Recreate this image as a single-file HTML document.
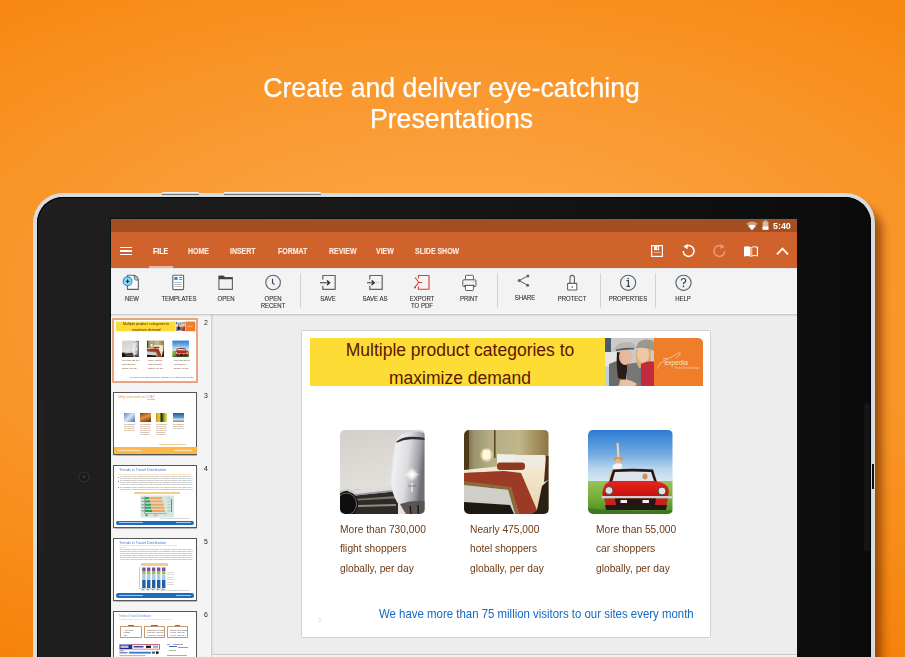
<!DOCTYPE html>
<html><head><meta charset="utf-8">
<style>
html,body{margin:0;padding:0;}
body{width:905px;height:657px;overflow:hidden;position:relative;font-family:"Liberation Sans",sans-serif;
background:radial-gradient(ellipse 820px 430px at 450px 300px,#FCA846 0%,#FBA03D 30%,#F8901F 70%,#F5820A 100%);}
.a{position:absolute;}
#title{left:-1px;width:905px;top:71.5px;text-align:center;color:#fff;font-size:27.5px;line-height:31.2px;transform:scaleX(0.97);-webkit-text-stroke:0.25px #fff;}
#shadowR{left:836px;top:208px;width:46px;height:500px;border-radius:28px;background:rgba(120,45,0,0.7);filter:blur(5px);}
#frame{left:33px;top:193px;width:842px;height:600px;border-radius:30px;background:#D9DCDE;}
#bezel{left:37px;top:197px;width:834px;height:600px;border-radius:26px;background:linear-gradient(90deg,#1F1F1F,#161616 50%,#0B0B0B);box-shadow:inset 0 0 0 1px #000;}
#screen{left:111px;top:219px;width:686px;height:438px;background:#EDEDED;box-shadow:0 0 0 1px #06141a;}
#status{left:111px;top:219px;width:686px;height:13px;background:#A34F22;}
#toolbar{left:111px;top:232px;width:686px;height:36px;background:#D0622B;}
#ribbon{left:111px;top:268px;width:686px;height:45px;background:linear-gradient(#DCE2E4 0,#EEF0F0 1px,#F3F3F3 2.5px);border-bottom:1px solid #F9F9F9;}
#pane{left:111px;top:314px;width:100px;height:343px;background:#F4F4F4;border-right:1px solid #D0D0D0;box-shadow:1px 0 1px rgba(0,0,0,0.06);}
#main{left:212px;top:654px;width:585px;height:3px;background:#FBF1E6;border-top:1px solid #C8C8C8;}
#slide{left:301px;top:330px;width:410px;height:308px;background:#fff;border:1px solid #D2D2D2;border-radius:1.5px;box-sizing:border-box;}
.tab{top:233px;height:36px;line-height:36px;font-size:8.5px;font-weight:700;color:#FBE9E0;white-space:nowrap;-webkit-text-stroke:0.15px #FBE9E0;}
.tab span{display:inline-block;transform-origin:0 50%;transform:scaleX(0.82);}
.txt{white-space:nowrap;}
.lbl{width:60px;text-align:center;font-size:6.6px;line-height:7px;color:#2E2E2E;-webkit-text-stroke:0.1px #2E2E2E;transform:scaleX(0.91);white-space:nowrap;}
.sep{top:273px;width:1px;height:35px;background:#D2D2D2;}
.ph{width:84.5px;height:84px;border-radius:5px;overflow:hidden;}
.ph svg{filter:blur(0.35px);}
.cap{font-size:10.4px;line-height:19.2px;color:#6E3A12;white-space:nowrap;transform-origin:0 0;transform:scaleX(0.985);}
.thb{left:112.7px;width:84.6px;height:63px;border:1.2px solid #555;background:#fff;box-sizing:border-box;box-shadow:0 0.5px 1px rgba(0,0,0,0.25);}
.num{left:202px;width:8px;text-align:center;font-size:6.8px;line-height:7px;color:#151515;margin-top:-1px;transform:scale(1.01);text-shadow:0 0 1px #fff;}
.tl{background:repeating-linear-gradient(#A87A50 0,#A87A50 0.7px,transparent 0.7px,transparent 2.1px);opacity:0.45;}
.gl{background:repeating-linear-gradient(#A0A0A0 0,#A0A0A0 0.7px,transparent 0.7px,transparent 1.8px);opacity:0.5;}
.bx{top:625.5px;width:21.5px;height:12px;border:0.8px solid #C49A6C;box-sizing:border-box;background:#fff;border-radius:0.8px;font-size:1.9px;line-height:2.5px;color:#333;padding:2.2px 0 0 2.5px;white-space:nowrap;overflow:hidden;}
</style></head><body>
<div id="title" class="a">Create and deliver eye-catching<br>Presentations</div>
<div id="shadowR" class="a"></div>
<div id="frame" class="a"></div>
<div id="bezel" class="a"></div>
<div class="a" style="left:162px;top:192px;width:37px;height:4px;background:linear-gradient(#eef0f1 0,#eef0f1 35%,#5e5e5e 50%,#6a6a6a 60%,#d6d8d9 80%);border-radius:1px"></div>
<div class="a" style="left:224px;top:192px;width:97px;height:4px;background:linear-gradient(#eef0f1 0,#eef0f1 35%,#5e5e5e 50%,#6a6a6a 60%,#d6d8d9 80%);border-radius:1px"></div>
<div class="a" style="left:39px;top:403px;width:4px;height:148px;background:#222;border-radius:2px"></div>
<div class="a" style="left:864px;top:403px;width:6px;height:148px;background:#151515;border-radius:2px"></div>
<div class="a" style="left:872px;top:464px;width:2px;height:25px;background:#111"></div>
<div class="a" style="left:78px;top:470.5px;width:12px;height:12px;border-radius:50%;background:radial-gradient(circle,#2a2a2a 0,#2a2a2a 1.8px,#161616 2.4px,#161616 3.6px,#2c2c2c 4.6px,#262626 5.4px,rgba(30,30,30,0) 6px)"></div>

<div id="screen" class="a"></div>
<div id="status" class="a"></div>
<div id="toolbar" class="a"></div>
<div id="ribbon" class="a"></div>
<div id="pane" class="a"></div>
<div id="main" class="a"></div>
<div id="slide" class="a"></div>
<div class="a" style="left:111px;top:314px;width:686px;height:1px;background:#C9C9C9"></div>
<div class="a" style="left:111px;top:315px;width:686px;height:1.5px;background:linear-gradient(rgba(0,0,0,0.08),rgba(0,0,0,0))"></div>

<!-- status bar -->
<svg class="a" style="left:746px;top:220.5px" width="12" height="10" viewBox="0 0 12 10"><path d="M0.3 2.8 Q6 -1.8 11.7 2.8 L6 9.3 Z" fill="#fff" opacity="0.45"/><path d="M2.4 5.2 Q6 2.4 9.6 5.2 L6 9.3 Z" fill="#fff"/></svg>
<svg class="a" style="left:762px;top:220px" width="7" height="10" viewBox="0 0 7 10"><rect x="2.2" y="0.3" width="2.6" height="1.2" fill="#d9b8a8"/><rect x="0.6" y="1.5" width="5.8" height="8.2" fill="#d9b8a8"/><rect x="0.6" y="6.5" width="5.8" height="3.2" fill="#fff"/></svg>
<div class="a txt" style="left:772.5px;top:218.5px;height:13px;line-height:13px;font-size:9.4px;font-weight:700;color:#fff;transform-origin:0 50%;transform:scaleX(0.95)">5:40</div>
<!-- hamburger -->
<div class="a" style="left:119.5px;top:246.7px;width:12.5px;height:1.6px;background:#fff"></div>
<div class="a" style="left:119.5px;top:250px;width:12.5px;height:1.6px;background:#fff"></div>
<div class="a" style="left:119.5px;top:253.5px;width:12.5px;height:1.6px;background:#fff"></div>
<!-- tabs -->
<div class="a tab" style="left:153.4px;width:14.6px;color:#fff"><span>FILE</span></div>
<div class="a tab" style="left:188.3px;width:21.7px"><span>HOME</span></div>
<div class="a tab" style="left:230.3px;width:26.6px"><span>INSERT</span></div>
<div class="a tab" style="left:277.8px;width:29.9px"><span>FORMAT</span></div>
<div class="a tab" style="left:328.7px;width:27.2px"><span>REVIEW</span></div>
<div class="a tab" style="left:376.2px;width:18.4px"><span>VIEW</span></div>
<div class="a tab" style="left:414.9px;width:44.2px"><span>SLIDE SHOW</span></div>
<div class="a" style="left:148.6px;top:266px;width:24.3px;height:2px;background:#E9B9A2"></div>
<!-- toolbar icons -->
<svg class="a" style="left:645px;top:238px" width="150" height="26" viewBox="645 238 150 26">
 <g fill="none" stroke="#fff" stroke-width="1.2">
  <rect x="651.6" y="245.6" width="10.8" height="10.8"/>
 </g>
 <rect x="654" y="246" width="5.2" height="4.2" fill="#fff"/>
 <rect x="657.2" y="246.6" width="1" height="2.6" fill="#D0622B"/>
 <path d="M653.5 252.5 H660.5" stroke="#f0c4ae" stroke-width="0.8"/>
 <path d="M685.5 246.6 A5.4 5.4 0 1 1 683.2 251" fill="none" stroke="#fff" stroke-width="1.5"/>
 <path d="M683.3 246.6 L687.6 243.9 L687.6 249.3 Z" fill="#fff"/>
 <path d="M722.5 246.6 A5.4 5.4 0 1 0 724.8 251" fill="none" stroke="#E59A78" stroke-width="1.5"/>
 <path d="M724.7 246.6 L720.4 243.9 L720.4 249.3 Z" fill="#E59A78"/>
 <path d="M744 246.8 Q747.5 245.6 751 247.2 Q754.5 245.6 758 246.8 V256.6 Q754.5 255.4 751 256.8 Q747.5 255.4 744 256.6 Z" fill="#fff"/>
 <path d="M751 247.5 V256.2" stroke="#D0622B" stroke-width="0.9"/>
 <path d="M752.2 247.6 Q754.7 246.8 756.8 247.6 V255.3 Q754.7 254.7 752.2 255.3 Z" fill="#D0622B"/>
 <path d="M777 254.3 L782.5 248.6 L788 254.3" fill="none" stroke="#fff" stroke-width="1.8"/>
</svg>



<!-- main slide content -->
<div class="a" id="slidec" style="left:301px;top:330px;width:410px;height:307px">
<div class="a" style="left:9.0px;top:7.5px;width:294.5px;height:48px;background:#FDDC36"></div>
<div class="a txt" style="left:9.0px;top:6.3px;width:300px;text-align:center;font-size:17.5px;line-height:28px;color:#5A1700">Multiple product categories to<br>maximize demand</div>
<div class="a" style="left:303.5px;top:7.5px;width:49.5px;height:48px;overflow:hidden"><svg width="49.5" height="48" viewBox="0 0 49.5 48" style="filter:blur(0.4px)">
<rect width="49.5" height="48" fill="#C9CCCB"/>
<rect x="0" y="0" width="6" height="14" fill="#4A5A70"/>
<rect x="0" y="14" width="14" height="20" fill="#E4E6E4"/>
<path d="M0 28 L22 30 L26 48 L0 48 Z" fill="#BCD2E4"/>
<path d="M4 26 L14 22 L22 44 L12 48 L4 48 Z" fill="#6A6C6A"/>
<path d="M12 14 Q11 26 13 40 L21 42 L24 16 Z" fill="#2A1C14"/>
<ellipse cx="20.5" cy="19" rx="6.5" ry="8" fill="#E9B89A"/>
<path d="M8 13 Q12 4 22 4 Q30 4 31 10 Q27 12 20 11 Q12 12 8 13 Z" fill="#BDB6AE"/>
<path d="M11 11.5 Q20 9 29 10 L29 11.5 Q20 11 11 13 Z" fill="#4A5C7A"/>
<path d="M22 26 L36 24 L40 48 L22 48 Z" fill="#777876"/>
<path d="M31 12 Q30 24 34 30 L46 28 L46 10 Z" fill="#D8B078"/>
<ellipse cx="38" cy="16.5" rx="6" ry="8" fill="#EFC6A8"/>
<path d="M31 10 Q32 2 41 1.5 Q49 1.5 49.5 6 L49.5 13 Q42 9 31 10 Z" fill="#9A9890"/>
<path d="M36 26 Q44 22 49.5 24 L49.5 48 L36 48 Z" fill="#C22A40"/>
<path d="M15 42 Q24 40 32 46 L30 48 L14 48 Z" fill="#E8C0A0"/>
</svg></div>
<div class="a" style="left:353.0px;top:7.5px;width:49px;height:48px;background:#EF7E2B;border-top-right-radius:5px"><svg width="49" height="48" viewBox="0 0 49 48" style="position:absolute;left:0;top:0">
<path d="M2.8 30.5 Q6 24 12 21.5 Q18 19 21 17 Q26 13.8 26.5 15.2 Q26 17.5 21.3 20.3 M9 20.8 Q12 19.8 13.5 20.8" fill="none" stroke="#FBE6D6" stroke-width="0.6"/>
<text x="10.5" y="26.8" font-family="Liberation Sans" font-size="6.6" fill="#FDEBDD" fill-opacity="0.92" textLength="23.5" lengthAdjust="spacingAndGlyphs">expedia</text>
<text x="21" y="30.5" font-family="Liberation Sans" font-size="2.6" fill="#FBD9C2" textLength="24" lengthAdjust="spacingAndGlyphs">Partner Services Group</text>
</svg></div>

<div class="a ph" style="left:39.0px;top:100.0px"><svg width="84.5" height="84" viewBox="0 0 84.5 84">
<defs>
<linearGradient id="sky1" x1="0" y1="0" x2="0.3" y2="1"><stop offset="0" stop-color="#D2CFCB"/><stop offset="0.5" stop-color="#DEDBD7"/><stop offset="1" stop-color="#E6E4E0"/></linearGradient>
<linearGradient id="nose" x1="0" y1="0" x2="1" y2="0.3"><stop offset="0" stop-color="#B4B7BC"/><stop offset="0.2" stop-color="#F0F0F2"/><stop offset="0.55" stop-color="#DCDCDE"/><stop offset="0.85" stop-color="#A0A1A6"/><stop offset="1" stop-color="#6E6F74"/></linearGradient>
<radialGradient id="glow"><stop offset="0" stop-color="#fff"/><stop offset="0.35" stop-color="#fff" stop-opacity="0.9"/><stop offset="1" stop-color="#fff" stop-opacity="0"/></radialGradient>
</defs>
<rect width="84.5" height="84" fill="url(#sky1)"/>
<path d="M0 61 L52 57 L58 66 L58 84 L0 84 Z" fill="#2E2A26"/>
<path d="M8 60.5 L51 55.5 L54 61.5 L10 66 Z" fill="#DCDCDE"/>
<path d="M10 64.5 L53 60 L54 61.5 L11 66 Z" fill="#9A9A9C"/>
<path d="M16 69 L55 66 L56 68.5 L16 70.5 Z" fill="#77726E"/>
<path d="M18 75 L56 74 L56 76 L18 77 Z" fill="#8E8A86"/>
<ellipse cx="6.5" cy="74" rx="11.5" ry="12.5" fill="#0E0E0E"/>
<path d="M-4 70 A11 12 0 0 1 15 64" fill="none" stroke="#C8C8C8" stroke-width="1.6"/>
<ellipse cx="6.5" cy="74" rx="10" ry="11" fill="none" stroke="#6A6A6A" stroke-width="1"/>
<path d="M84.5 3 Q74 0.5 66 2.5 Q56 6 53 20 Q50 36 51 52 Q52 64 57 72 Q62 80 66 84 L84.5 84 Z" fill="url(#nose)"/>
<path d="M56.5 11.5 Q61 7.5 70 6.8 Q79 6.5 84.5 8 L84.5 10 Q78 9 71 9.2 Q63 9.6 56.5 12.8 Z" fill="#2C3036"/>
<path d="M60 74 Q72 70 84.5 71 L84.5 84 L66 84 Z" fill="#5A5552"/>
<path d="M70 76 L71 84 M78 75 L78.5 84" stroke="#1a1a1a" stroke-width="1.5"/>
<circle cx="72" cy="44.5" r="6.5" fill="url(#glow)"/>
<path d="M65 44.5 H79 M72 38 V51" stroke="#fff" stroke-width="0.6" opacity="0.8"/>
<rect x="71.2" y="53" width="1.6" height="9" fill="#fff" opacity="0.7"/>
<path d="M68 56 H76" stroke="#555" stroke-width="1" opacity="0.6"/>
</svg></div>
<div class="a ph" style="left:163.0px;top:100.0px"><svg width="84.5" height="84" viewBox="0 0 84.5 84">
<defs>
<linearGradient id="wall" x1="0" y1="0" x2="1" y2="0"><stop offset="0" stop-color="#6E5A2E"/><stop offset="0.12" stop-color="#9C9470"/><stop offset="0.3" stop-color="#B3AC84"/><stop offset="0.65" stop-color="#C2B68A"/><stop offset="1" stop-color="#8E7542"/></linearGradient>
<radialGradient id="lamp"><stop offset="0" stop-color="#FFFBE8"/><stop offset="0.5" stop-color="#FFF3C8"/><stop offset="1" stop-color="#FFE9A0" stop-opacity="0"/></radialGradient>
<linearGradient id="sheet" x1="0" y1="0" x2="0" y2="1"><stop offset="0" stop-color="#F4EAD2"/><stop offset="1" stop-color="#E6D6B0"/></linearGradient>
</defs>
<rect width="84.5" height="84" fill="url(#wall)"/>
<rect x="30" y="0" width="1.6" height="28" fill="#5E4A22"/>
<rect x="0" y="0" width="5" height="40" fill="#4E3A1A"/>
<ellipse cx="22.5" cy="25" rx="7" ry="8" fill="url(#lamp)"/>
<rect x="19" y="20" width="7" height="9" fill="#FFF8E0"/>
<path d="M33 24 L53 24.5 L53 36 L33 37 Z" fill="#F0EEE8"/>
<path d="M50 25 L81 25 L84 38 L50 38 Z" fill="#EEEAE2"/>
<path d="M0 40 L33 36.5 L84.5 36.5 L84.5 60 L72 82 L57 43 L40 41 L0 43 Z" fill="url(#sheet)"/>
<rect x="33" y="32.5" width="28" height="7.5" rx="3" fill="#8E3A1E"/>
<path d="M0 43 L40 41 L57 43 L73 80 L68 84 L55 84 L47 58 L0 52 Z" fill="#9C3A26"/>
<path d="M0 51 L47 57 L55 84 L51 84 L44 60 L0 55 Z" fill="#8A6A3A"/>
<path d="M0 55 L44 60 L51 84 L0 84 Z" fill="#CFCEC8"/>
<path d="M0 72 L46 75 L50 84 L0 84 Z" fill="#1E1812"/>
<path d="M78 56 L84.5 50 L84.5 84 L68 84 L73 80 Z" fill="#2A2016"/>
<path d="M82 26 L84.5 26 L84.5 50 L80 52 Z" fill="#4A2A1A"/>
</svg></div>
<div class="a ph" style="left:287.3px;top:100.0px"><svg width="84.5" height="84" viewBox="0 0 84.5 84">
<defs>
<linearGradient id="sky3" x1="0" y1="0" x2="0" y2="1"><stop offset="0" stop-color="#2C7BD4"/><stop offset="0.45" stop-color="#6FA9E0"/><stop offset="0.75" stop-color="#B9D6EE"/><stop offset="1" stop-color="#D8E8F2"/></linearGradient>
<linearGradient id="grass" x1="0" y1="0" x2="0" y2="1"><stop offset="0" stop-color="#9AC25A"/><stop offset="0.5" stop-color="#74AE3A"/><stop offset="1" stop-color="#4A8A24"/></linearGradient>
<linearGradient id="red" x1="0" y1="0" x2="0" y2="1"><stop offset="0" stop-color="#E8241C"/><stop offset="1" stop-color="#C4120E"/></linearGradient>
</defs>
<rect width="84.5" height="52" fill="url(#sky3)"/>
<rect y="51" width="84.5" height="33" fill="url(#grass)"/>
<path d="M28.5 13 L30.5 13 L31.5 28 L29.5 28.5 Z" fill="#F2D2B0"/>
<path d="M25 28.5 Q30 25.5 35.5 28.5 L33 31 L27 31 Z" fill="#C89A5A"/>
<ellipse cx="30" cy="31.5" rx="2.6" ry="2.8" fill="#E8B890"/>
<path d="M25 35 Q29 32 34 34 L33 50 L24 50 Z" fill="#F6F2EC"/>
<path d="M24 36 L21 48 L24 49 Z" fill="#E8C8A0"/>
<path d="M21 52 L25 39.5 Q45 38 65 39.5 L69 52 Z" fill="#2A1616"/>
<path d="M24.5 51 L27 42 Q45 40.8 63 42 L66 51 Z" fill="#DDE4EA"/>
<ellipse cx="57" cy="46.5" rx="2.5" ry="3" fill="#C8906A"/>
<path d="M15 60 Q16 52 24 51 L66 51 Q75 52 79 56 Q82 60 80 66.5 L15 66.5 Q13.5 63 15 60 Z" fill="url(#red)"/>
<circle cx="21" cy="60.5" r="4" fill="#DCE0E4" stroke="#3a3a3a" stroke-width="0.9"/>
<circle cx="74" cy="61" r="4" fill="#DCE0E4" stroke="#3a3a3a" stroke-width="0.9"/>
<rect x="13.5" y="66" width="71" height="2.4" rx="1" fill="#CDD1D5"/>
<path d="M16 68.4 L80 68.4 L78.5 75 L18 75 Z" fill="#C8201A"/>
<path d="M27 68.4 L68 68.4 L67 75 L28 75 Z" fill="#2A1412"/>
<rect x="32.5" y="70" width="6.5" height="3" fill="#EEEEEE"/>
<rect x="54.5" y="70" width="6.5" height="3" fill="#EEEEEE"/>
<path d="M17 75 L79 75 L78 80 L18 80 Z" fill="#1E1A18"/>
<path d="M0 78 Q30 82 84.5 80 L84.5 84 L0 84 Z" fill="#2E5E18" opacity="0.5"/>
</svg></div>
<div class="a cap" style="top:190.2px;left:38.7px">More than 730,000<br>flight shoppers<br>globally, per day</div>
<div class="a cap" style="top:190.2px;left:168.7px">Nearly 475,000<br>hotel shoppers<br>globally, per day</div>
<div class="a cap" style="top:190.2px;left:294.5px">More than 55,000<br>car shoppers<br>globally, per day</div>
<div class="a txt" style="left:78.0px;top:275.7px;font-size:12.4px;line-height:16px;color:#1368C6;transform-origin:0 0;transform:scaleX(0.922)">We have more than 75 million visitors to our sites every month</div>
<div class="a txt" style="left:17.5px;top:287.0px;font-size:5px;line-height:6px;color:#F9C889">2</div>
</div>

<!-- thumbnails -->
<div class="a" style="left:113.5px;top:319.5px;width:83px;height:62px;background:#fff;overflow:hidden"><div class="a" style="left:0;top:0;width:410px;height:307px;transform-origin:0 0;transform:scale(0.2025)">
<div class="a" style="left:9.0px;top:7.5px;width:294.5px;height:48px;background:#FDDC36"></div>
<div class="a txt" style="left:9.0px;top:6.3px;width:300px;text-align:center;font-size:17.5px;line-height:28px;color:#5A1700">Multiple product categories to<br>maximize demand</div>
<div class="a" style="left:303.5px;top:7.5px;width:49.5px;height:48px;overflow:hidden"><svg width="49.5" height="48" viewBox="0 0 49.5 48" style="filter:blur(0.4px)">
<rect width="49.5" height="48" fill="#C9CCCB"/>
<rect x="0" y="0" width="6" height="14" fill="#4A5A70"/>
<rect x="0" y="14" width="14" height="20" fill="#E4E6E4"/>
<path d="M0 28 L22 30 L26 48 L0 48 Z" fill="#BCD2E4"/>
<path d="M4 26 L14 22 L22 44 L12 48 L4 48 Z" fill="#6A6C6A"/>
<path d="M12 14 Q11 26 13 40 L21 42 L24 16 Z" fill="#2A1C14"/>
<ellipse cx="20.5" cy="19" rx="6.5" ry="8" fill="#E9B89A"/>
<path d="M8 13 Q12 4 22 4 Q30 4 31 10 Q27 12 20 11 Q12 12 8 13 Z" fill="#BDB6AE"/>
<path d="M11 11.5 Q20 9 29 10 L29 11.5 Q20 11 11 13 Z" fill="#4A5C7A"/>
<path d="M22 26 L36 24 L40 48 L22 48 Z" fill="#777876"/>
<path d="M31 12 Q30 24 34 30 L46 28 L46 10 Z" fill="#D8B078"/>
<ellipse cx="38" cy="16.5" rx="6" ry="8" fill="#EFC6A8"/>
<path d="M31 10 Q32 2 41 1.5 Q49 1.5 49.5 6 L49.5 13 Q42 9 31 10 Z" fill="#9A9890"/>
<path d="M36 26 Q44 22 49.5 24 L49.5 48 L36 48 Z" fill="#C22A40"/>
<path d="M15 42 Q24 40 32 46 L30 48 L14 48 Z" fill="#E8C0A0"/>
</svg></div>
<div class="a" style="left:353.0px;top:7.5px;width:49px;height:48px;background:#EF7E2B;border-top-right-radius:5px"><svg width="49" height="48" viewBox="0 0 49 48" style="position:absolute;left:0;top:0">
<path d="M2.8 30.5 Q6 24 12 21.5 Q18 19 21 17 Q26 13.8 26.5 15.2 Q26 17.5 21.3 20.3 M9 20.8 Q12 19.8 13.5 20.8" fill="none" stroke="#FBE6D6" stroke-width="0.6"/>
<text x="10.5" y="26.8" font-family="Liberation Sans" font-size="6.6" fill="#FDEBDD" fill-opacity="0.92" textLength="23.5" lengthAdjust="spacingAndGlyphs">expedia</text>
<text x="21" y="30.5" font-family="Liberation Sans" font-size="2.6" fill="#FBD9C2" textLength="24" lengthAdjust="spacingAndGlyphs">Partner Services Group</text>
</svg></div>

<div class="a ph" style="left:39.0px;top:100.0px"><svg width="84.5" height="84" viewBox="0 0 84.5 84">

<rect width="84.5" height="84" fill="url(#sky1)"/>
<path d="M0 61 L52 57 L58 66 L58 84 L0 84 Z" fill="#2E2A26"/>
<path d="M8 60.5 L51 55.5 L54 61.5 L10 66 Z" fill="#DCDCDE"/>
<path d="M10 64.5 L53 60 L54 61.5 L11 66 Z" fill="#9A9A9C"/>
<path d="M16 69 L55 66 L56 68.5 L16 70.5 Z" fill="#77726E"/>
<path d="M18 75 L56 74 L56 76 L18 77 Z" fill="#8E8A86"/>
<ellipse cx="6.5" cy="74" rx="11.5" ry="12.5" fill="#0E0E0E"/>
<path d="M-4 70 A11 12 0 0 1 15 64" fill="none" stroke="#C8C8C8" stroke-width="1.6"/>
<ellipse cx="6.5" cy="74" rx="10" ry="11" fill="none" stroke="#6A6A6A" stroke-width="1"/>
<path d="M84.5 3 Q74 0.5 66 2.5 Q56 6 53 20 Q50 36 51 52 Q52 64 57 72 Q62 80 66 84 L84.5 84 Z" fill="url(#nose)"/>
<path d="M56.5 11.5 Q61 7.5 70 6.8 Q79 6.5 84.5 8 L84.5 10 Q78 9 71 9.2 Q63 9.6 56.5 12.8 Z" fill="#2C3036"/>
<path d="M60 74 Q72 70 84.5 71 L84.5 84 L66 84 Z" fill="#5A5552"/>
<path d="M70 76 L71 84 M78 75 L78.5 84" stroke="#1a1a1a" stroke-width="1.5"/>
<circle cx="72" cy="44.5" r="6.5" fill="url(#glow)"/>
<path d="M65 44.5 H79 M72 38 V51" stroke="#fff" stroke-width="0.6" opacity="0.8"/>
<rect x="71.2" y="53" width="1.6" height="9" fill="#fff" opacity="0.7"/>
<path d="M68 56 H76" stroke="#555" stroke-width="1" opacity="0.6"/>
</svg></div>
<div class="a ph" style="left:163.0px;top:100.0px"><svg width="84.5" height="84" viewBox="0 0 84.5 84">

<rect width="84.5" height="84" fill="url(#wall)"/>
<rect x="30" y="0" width="1.6" height="28" fill="#5E4A22"/>
<rect x="0" y="0" width="5" height="40" fill="#4E3A1A"/>
<ellipse cx="22.5" cy="25" rx="7" ry="8" fill="url(#lamp)"/>
<rect x="19" y="20" width="7" height="9" fill="#FFF8E0"/>
<path d="M33 24 L53 24.5 L53 36 L33 37 Z" fill="#F0EEE8"/>
<path d="M50 25 L81 25 L84 38 L50 38 Z" fill="#EEEAE2"/>
<path d="M0 40 L33 36.5 L84.5 36.5 L84.5 60 L72 82 L57 43 L40 41 L0 43 Z" fill="url(#sheet)"/>
<rect x="33" y="32.5" width="28" height="7.5" rx="3" fill="#8E3A1E"/>
<path d="M0 43 L40 41 L57 43 L73 80 L68 84 L55 84 L47 58 L0 52 Z" fill="#9C3A26"/>
<path d="M0 51 L47 57 L55 84 L51 84 L44 60 L0 55 Z" fill="#8A6A3A"/>
<path d="M0 55 L44 60 L51 84 L0 84 Z" fill="#CFCEC8"/>
<path d="M0 72 L46 75 L50 84 L0 84 Z" fill="#1E1812"/>
<path d="M78 56 L84.5 50 L84.5 84 L68 84 L73 80 Z" fill="#2A2016"/>
<path d="M82 26 L84.5 26 L84.5 50 L80 52 Z" fill="#4A2A1A"/>
</svg></div>
<div class="a ph" style="left:287.3px;top:100.0px"><svg width="84.5" height="84" viewBox="0 0 84.5 84">

<rect width="84.5" height="52" fill="url(#sky3)"/>
<rect y="51" width="84.5" height="33" fill="url(#grass)"/>
<path d="M28.5 13 L30.5 13 L31.5 28 L29.5 28.5 Z" fill="#F2D2B0"/>
<path d="M25 28.5 Q30 25.5 35.5 28.5 L33 31 L27 31 Z" fill="#C89A5A"/>
<ellipse cx="30" cy="31.5" rx="2.6" ry="2.8" fill="#E8B890"/>
<path d="M25 35 Q29 32 34 34 L33 50 L24 50 Z" fill="#F6F2EC"/>
<path d="M24 36 L21 48 L24 49 Z" fill="#E8C8A0"/>
<path d="M21 52 L25 39.5 Q45 38 65 39.5 L69 52 Z" fill="#2A1616"/>
<path d="M24.5 51 L27 42 Q45 40.8 63 42 L66 51 Z" fill="#DDE4EA"/>
<ellipse cx="57" cy="46.5" rx="2.5" ry="3" fill="#C8906A"/>
<path d="M15 60 Q16 52 24 51 L66 51 Q75 52 79 56 Q82 60 80 66.5 L15 66.5 Q13.5 63 15 60 Z" fill="url(#red)"/>
<circle cx="21" cy="60.5" r="4" fill="#DCE0E4" stroke="#3a3a3a" stroke-width="0.9"/>
<circle cx="74" cy="61" r="4" fill="#DCE0E4" stroke="#3a3a3a" stroke-width="0.9"/>
<rect x="13.5" y="66" width="71" height="2.4" rx="1" fill="#CDD1D5"/>
<path d="M16 68.4 L80 68.4 L78.5 75 L18 75 Z" fill="#C8201A"/>
<path d="M27 68.4 L68 68.4 L67 75 L28 75 Z" fill="#2A1412"/>
<rect x="32.5" y="70" width="6.5" height="3" fill="#EEEEEE"/>
<rect x="54.5" y="70" width="6.5" height="3" fill="#EEEEEE"/>
<path d="M17 75 L79 75 L78 80 L18 80 Z" fill="#1E1A18"/>
<path d="M0 78 Q30 82 84.5 80 L84.5 84 L0 84 Z" fill="#2E5E18" opacity="0.5"/>
</svg></div>
<div class="a cap" style="top:190.2px;left:38.7px">More than 730,000<br>flight shoppers<br>globally, per day</div>
<div class="a cap" style="top:190.2px;left:168.7px">Nearly 475,000<br>hotel shoppers<br>globally, per day</div>
<div class="a cap" style="top:190.2px;left:294.5px">More than 55,000<br>car shoppers<br>globally, per day</div>
<div class="a txt" style="left:78.0px;top:275.7px;font-size:12.4px;line-height:16px;color:#1368C6;transform-origin:0 0;transform:scaleX(0.922)">We have more than 75 million visitors to our sites every month</div>
<div class="a txt" style="left:17.5px;top:287.0px;font-size:5px;line-height:6px;color:#F9C889">2</div>
</div></div>
<div class="a th" style="left:112px;top:318px;width:86px;height:65px;border:2px solid #E9A486;box-sizing:border-box"></div>
<div class="a num" style="top:320px">2</div>

<div class="a thb" style="top:391.8px"></div>
<div class="a num" style="top:392.6px">3</div>
<div class="a" style="left:118.5px;top:396px;width:38px;height:3px;font-size:3.4px;line-height:3px;color:#F0912E;white-space:nowrap">Why work with an OTA?</div><div class="a" style="left:147px;top:398.9px;width:8px;height:0.6px;background:#F5B5BD"></div>
<div class="a" style="left:124px;top:412.5px;width:11px;height:9.5px;background:linear-gradient(135deg,#5C8CC8,#D8E4F0 50%,#3C6CA8)"></div>
<div class="a" style="left:140px;top:412.5px;width:11px;height:9.5px;background:linear-gradient(160deg,#7A3C10,#E89040 45%,#5A2A08)"></div>
<div class="a" style="left:156px;top:412.5px;width:11px;height:9.5px;background:linear-gradient(90deg,#C89010,#F0D040 30%,#203010 50%,#90B030 75%,#FFE070)"></div>
<div class="a" style="left:173px;top:412.5px;width:11px;height:9.5px;background:linear-gradient(180deg,#1E5A9A,#5AA0D8 50%,#E8E0C8 70%,#7A8090)"></div>
<div class="a" style="left:124px;top:424px;width:11px;height:7.6px;overflow:hidden;font-size:1.6px;line-height:1.9px;color:#8A5A30;word-break:break-all">The transaction market continues to grow as online travel agencies capture more share from traditional offline channels and suppliers worldwide The transaction market continues to grow as online travel agencies capture more share from traditional offline channels and suppliers worldwide The transaction market continues to grow as online travel agencies capture more share from traditional offline channels and suppliers worldwide The transaction market continues to grow as online travel agencies capture more share from traditional offline channels and suppliers worldwide</div>
<div class="a" style="left:140px;top:424px;width:11px;height:11.399999999999999px;overflow:hidden;font-size:1.6px;line-height:1.9px;color:#8A5A30;word-break:break-all">The transaction market continues to grow as online travel agencies capture more share from traditional offline channels and suppliers worldwide The transaction market continues to grow as online travel agencies capture more share from traditional offline channels and suppliers worldwide The transaction market continues to grow as online travel agencies capture more share from traditional offline channels and suppliers worldwide The transaction market continues to grow as online travel agencies capture more share from traditional offline channels and suppliers worldwide</div>
<div class="a" style="left:156px;top:424px;width:11px;height:11.399999999999999px;overflow:hidden;font-size:1.6px;line-height:1.9px;color:#8A5A30;word-break:break-all">The transaction market continues to grow as online travel agencies capture more share from traditional offline channels and suppliers worldwide The transaction market continues to grow as online travel agencies capture more share from traditional offline channels and suppliers worldwide The transaction market continues to grow as online travel agencies capture more share from traditional offline channels and suppliers worldwide The transaction market continues to grow as online travel agencies capture more share from traditional offline channels and suppliers worldwide</div>
<div class="a" style="left:173px;top:424px;width:11px;height:5.699999999999999px;overflow:hidden;font-size:1.6px;line-height:1.9px;color:#8A5A30;word-break:break-all">The transaction market continues to grow as online travel agencies capture more share from traditional offline channels and suppliers worldwide The transaction market continues to grow as online travel agencies capture more share from traditional offline channels and suppliers worldwide The transaction market continues to grow as online travel agencies capture more share from traditional offline channels and suppliers worldwide The transaction market continues to grow as online travel agencies capture more share from traditional offline channels and suppliers worldwide</div>
<div class="a" style="left:159px;top:443.5px;width:27px;height:1.2px;background:#FAD08A"></div>
<div class="a" style="left:113.5px;top:447px;width:83px;height:6.8px;background:#FBB748"></div>
<div class="a" style="left:117px;top:449.8px;width:24px;height:1px;background:#FDE2B4"></div>
<div class="a" style="left:174px;top:449.8px;width:18px;height:1px;background:#FDE2B4"></div>

<div class="a thb" style="top:465.2px"></div>
<div class="a num" style="top:466px">4</div>
<div class="a" style="left:118.5px;top:468.4px;font-size:3.5px;line-height:4px;color:#3C7CCC;white-space:nowrap;transform-origin:0 0;transform:scaleX(1.08)">Trends in Travel Distribution</div>
<div class="a" style="left:118.5px;top:472.8px;width:72px;height:2px;overflow:hidden;font-size:1.8px;line-height:2px;color:#F4A640;white-space:nowrap">Online travel agencies continue to gain share from supplier direct channels across all travel segments worldwide</div>
<div class="a" style="left:119.5px;top:475.8px;width:73px;height:3.9px;overflow:hidden;font-size:1.75px;line-height:1.95px;color:#6a6a6a;word-break:break-all">The transaction market continues to grow as online travel agencies capture more share from traditional offline channels and suppliers worldwide The transaction market continues to grow as online travel agencies capture more share from traditional offline channels and suppliers worldwide The transaction market continues to grow as online travel agencies capture more share from traditional offline channels and suppliers worldwide The transaction market continues to grow as online travel agencies capture more share from traditional offline channels and suppliers worldwide</div><div class="a" style="left:119.5px;top:479.8px;width:73px;height:5.85px;overflow:hidden;font-size:1.75px;line-height:1.95px;color:#6a6a6a;word-break:break-all">The transaction market continues to grow as online travel agencies capture more share from traditional offline channels and suppliers worldwide The transaction market continues to grow as online travel agencies capture more share from traditional offline channels and suppliers worldwide The transaction market continues to grow as online travel agencies capture more share from traditional offline channels and suppliers worldwide The transaction market continues to grow as online travel agencies capture more share from traditional offline channels and suppliers worldwide</div><div class="a" style="left:119.5px;top:486.6px;width:73px;height:3.9px;overflow:hidden;font-size:1.75px;line-height:1.95px;color:#6a6a6a;word-break:break-all">The transaction market continues to grow as online travel agencies capture more share from traditional offline channels and suppliers worldwide The transaction market continues to grow as online travel agencies capture more share from traditional offline channels and suppliers worldwide The transaction market continues to grow as online travel agencies capture more share from traditional offline channels and suppliers worldwide The transaction market continues to grow as online travel agencies capture more share from traditional offline channels and suppliers worldwide</div><div class="a" style="left:117.6px;top:476.5px;width:0.8px;height:0.8px;background:#888"></div><div class="a" style="left:117.6px;top:480.5px;width:0.8px;height:0.8px;background:#888"></div><div class="a" style="left:117.6px;top:487.3px;width:0.8px;height:0.8px;background:#888"></div>
<div class="a" style="left:134px;top:492px;width:46px;height:2.2px;background:#F8CC88"></div>
<svg class="a" style="left:140px;top:495px" width="35" height="23" viewBox="0 0 35 23">
<rect x="0.5" y="0.5" width="33.5" height="22" fill="#D3E7DF"/>
<g fill="#2E9E5A"><rect x="5" y="2.2" width="4" height="2"/><rect x="5" y="5.4" width="5" height="2"/><rect x="5" y="8.7" width="6" height="2"/><rect x="5" y="11.7" width="6" height="2"/><rect x="5" y="14.8" width="7" height="2.2"/></g>
<g fill="#F3A25C"><rect x="9" y="2.2" width="13" height="2"/><rect x="10" y="5.4" width="12.8" height="2"/><rect x="11" y="8.7" width="12.8" height="2"/><rect x="11" y="11.7" width="13.3" height="2"/><rect x="12" y="14.8" width="12.8" height="2.2"/></g>
<g fill="#9AA8A4"><rect x="1.5" y="2.5" width="2.5" height="1.4"/><rect x="1.5" y="5.7" width="2.5" height="1.4"/><rect x="1.5" y="9" width="2.5" height="1.4"/><rect x="1.5" y="12" width="2.5" height="1.4"/><rect x="1.5" y="15.1" width="2.5" height="1.4"/></g>
<rect x="4.6" y="1.5" width="0.5" height="17" fill="#555"/>
<rect x="4.6" y="18.3" width="22" height="0.5" fill="#777"/>
<g fill="#B8C4C0"><rect x="27.5" y="2.5" width="3" height="1.2"/><rect x="27.5" y="5.7" width="3" height="1.2"/><rect x="27.5" y="9" width="3" height="1.2"/><rect x="27.5" y="12" width="3" height="1.2"/><rect x="27.5" y="15.1" width="3" height="1.2"/></g>
<rect x="31" y="4" width="0.8" height="13" fill="#666"/>
<rect x="5" y="19.5" width="3" height="1.3" fill="#2E9E5A"/><rect x="14" y="19.5" width="3" height="1.3" fill="#F3A25C"/>
</svg>
<div class="a" style="left:160px;top:517.5px;width:30px;height:1.5px;background:#D8D8D8"></div>
<div class="a" style="left:116px;top:520.5px;width:78px;height:4.5px;border-radius:2.2px;background:#1F6BC0"></div><div class="a" style="left:119px;top:522.3px;width:24px;height:0.8px;background:#A8C8F0"></div><div class="a" style="left:176px;top:522.3px;width:15px;height:0.8px;background:#A8C8F0"></div>

<div class="a thb" style="top:538.2px"></div>
<div class="a num" style="top:539px">5</div>
<div class="a" style="left:118.5px;top:541px;font-size:3.5px;line-height:4px;color:#3C7CCC;white-space:nowrap;transform-origin:0 0;transform:scaleX(1.08)">Trends in Travel Distribution</div>
<div class="a" style="left:118.5px;top:544.4px;width:58px;height:2px;overflow:hidden;font-size:1.8px;line-height:2px;color:#F4A640;white-space:nowrap">Leisure travelers use online travel agencies and supplier sites when booking travel</div>
<div class="a" style="left:118.5px;top:546.4px;width:10px;height:2px;overflow:hidden;font-size:1.8px;line-height:2px;color:#F4A640;white-space:nowrap">channels</div>
<div class="a" style="left:119.5px;top:548.6px;width:73px;height:5.85px;overflow:hidden;font-size:1.75px;line-height:1.95px;color:#6a6a6a;word-break:break-all">The transaction market continues to grow as online travel agencies capture more share from traditional offline channels and suppliers worldwide The transaction market continues to grow as online travel agencies capture more share from traditional offline channels and suppliers worldwide The transaction market continues to grow as online travel agencies capture more share from traditional offline channels and suppliers worldwide The transaction market continues to grow as online travel agencies capture more share from traditional offline channels and suppliers worldwide</div><div class="a" style="left:119.5px;top:555.2px;width:73px;height:5.85px;overflow:hidden;font-size:1.75px;line-height:1.95px;color:#6a6a6a;word-break:break-all">The transaction market continues to grow as online travel agencies capture more share from traditional offline channels and suppliers worldwide The transaction market continues to grow as online travel agencies capture more share from traditional offline channels and suppliers worldwide The transaction market continues to grow as online travel agencies capture more share from traditional offline channels and suppliers worldwide The transaction market continues to grow as online travel agencies capture more share from traditional offline channels and suppliers worldwide</div>
<div class="a" style="left:141px;top:563px;width:27px;height:3px;background:#F8CC88"></div>
<svg class="a" style="left:138px;top:566px" width="30" height="25" viewBox="0 0 30 25"><rect x="1.2" y="1" width="0.5" height="21" fill="#999"/><rect x="1.2" y="22" width="26" height="0.5" fill="#aaa"/><rect x="4.2" y="1.5" width="3.4" height="4" fill="#7B4FA2"/><rect x="4.2" y="5.5" width="3.4" height="3" fill="#9DC044"/><rect x="4.2" y="8.5" width="3.4" height="5.5" fill="#A8CCEC"/><rect x="4.2" y="14" width="3.4" height="8" fill="#2060A4"/><rect x="9" y="1.5" width="3.4" height="4" fill="#7B4FA2"/><rect x="9" y="5.5" width="3.4" height="3" fill="#9DC044"/><rect x="9" y="8.5" width="3.4" height="5.5" fill="#A8CCEC"/><rect x="9" y="14" width="3.4" height="8" fill="#2060A4"/><rect x="14" y="1.5" width="3.4" height="4" fill="#7B4FA2"/><rect x="14" y="5.5" width="3.4" height="3" fill="#9DC044"/><rect x="14" y="8.5" width="3.4" height="5.5" fill="#A8CCEC"/><rect x="14" y="14" width="3.4" height="8" fill="#2060A4"/><rect x="19" y="1.5" width="3.4" height="4" fill="#7B4FA2"/><rect x="19" y="5.5" width="3.4" height="3" fill="#9DC044"/><rect x="19" y="8.5" width="3.4" height="5.5" fill="#A8CCEC"/><rect x="19" y="14" width="3.4" height="8" fill="#2060A4"/><rect x="24" y="1.5" width="3.4" height="4" fill="#7B4FA2"/><rect x="24" y="5.5" width="3.4" height="3" fill="#9DC044"/><rect x="24" y="8.5" width="3.4" height="5.5" fill="#A8CCEC"/><rect x="24" y="14" width="3.4" height="8" fill="#2060A4"/><g fill="#888"><rect x="3.5" y="23.2" width="3" height="1"/><rect x="8.5" y="23.2" width="3" height="1"/><rect x="13.5" y="23.2" width="3" height="1"/><rect x="18.5" y="23.2" width="3" height="1"/><rect x="23.5" y="23.2" width="3" height="1"/></g></svg>
<div class="a" style="left:167px;top:572px;width:7px;height:14.399999999999999px;overflow:hidden;font-size:1.5px;line-height:2.4px;color:#888;word-break:break-all">The transaction market continues to grow as online travel agencies capture more share from traditional offline channels and suppliers worldwide The transaction market continues to grow as online travel agencies capture more share from traditional offline channels and suppliers worldwide The transaction market continues to grow as online travel agencies capture more share from traditional offline channels and suppliers worldwide The transaction market continues to grow as online travel agencies capture more share from traditional offline channels and suppliers worldwide</div>
<div class="a" style="left:160px;top:589.5px;width:30px;height:1.2px;background:#D8D8D8"></div>
<div class="a" style="left:116px;top:593.3px;width:78px;height:4.5px;border-radius:2.2px;background:#1F6BC0"></div><div class="a" style="left:119px;top:595.1px;width:24px;height:0.8px;background:#A8C8F0"></div><div class="a" style="left:176px;top:595.1px;width:15px;height:0.8px;background:#A8C8F0"></div>

<div class="a thb" style="top:611.3px;height:60px"></div>
<div class="a num" style="top:612px">6</div>
<div class="a" style="left:118.5px;top:614.6px;font-size:2.6px;line-height:3px;color:#5A90D4;white-space:nowrap">Trends in Travel Distribution</div>
<div class="a" style="left:118.5px;top:618.3px;width:53px;height:2px;overflow:hidden;font-size:1.9px;line-height:2px;color:#F7B255;white-space:nowrap">Purchasing patterns differ for online travel agencies vs supplier direct</div>
<div class="a bx" style="left:120px">&nbsp;&nbsp;&nbsp;Tax Relief<br>Vintage<br>Late</div>
<div class="a bx" style="left:143.5px">Ostravaski vs Kasalto<br>Q-20,000 - 200,000<br>1,000,000 - 200,700</div>
<div class="a bx" style="left:166.8px">Tanzaniya vs Kasalto<br>10,771 - 270,770<br>40,790 - 200,000</div>
<div class="a" style="left:128px;top:625px;width:6px;height:1.2px;background:#D84A2A"></div>
<div class="a" style="left:151px;top:625px;width:7px;height:1.2px;background:#D84A2A"></div>
<div class="a" style="left:175px;top:625px;width:5px;height:1.2px;background:#D84A2A"></div>
<svg class="a" style="left:119px;top:643.5px" width="42" height="13" viewBox="0 0 42 13">
<rect x="0.5" y="0.5" width="40" height="5" fill="#1C2F86"/>
<rect x="13" y="0.8" width="27.3" height="4.3" fill="#fff" stroke="#D82A3A" stroke-width="0.6"/>
<rect x="14.5" y="2" width="10" height="1.5" fill="#2A4AA8"/>
<rect x="27" y="1.7" width="5" height="2.2" fill="#111"/>
<rect x="34" y="1.8" width="5" height="2" fill="#9AA8D0"/>
<rect x="1.5" y="1.5" width="8" height="2.5" fill="#D8E0F8" opacity="0.8"/>
<rect x="0.5" y="5.5" width="40" height="4" fill="#F4F6FA"/>
<rect x="0.5" y="6.2" width="4" height="1" fill="#E08040"/>
<rect x="0.5" y="8" width="8" height="1.4" fill="#6A8AD0"/>
<rect x="10" y="7.8" width="22" height="1.8" fill="#2F7FD8"/>
<rect x="33" y="7.6" width="3" height="2" fill="#555"/>
<rect x="37" y="7.4" width="2.5" height="2.5" fill="#111"/>
<rect x="0.5" y="11.3" width="26" height="0.8" fill="#999"/>
</svg>
<div class="a" style="left:167px;top:643.5px;width:3px;height:0.8px;background:#aaa"></div>
<div class="a" style="left:173px;top:643.5px;width:10px;height:0.8px;background:#aaa"></div>
<div class="a" style="left:166.8px;top:655px;width:20px;height:0.8px;background:#aaa"></div>

<div class="a" style="left:169px;top:646px;width:8px;height:1.2px;background:#5A5ADA"></div>
<div class="a" style="left:169px;top:650px;width:7px;height:1.2px;background:#8CCF8C"></div>
<div class="a" style="left:178px;top:646.5px;width:10px;height:1px;background:#999"></div>
<!-- ribbon icons -->
<svg class="a" style="left:111px;top:268px" width="686" height="26" viewBox="111 268 686 26">
 <g stroke="#5F6368" stroke-width="1.1" fill="#fff" stroke-linejoin="round">
  <path d="M127.5 275.2 H134 Q138.3 277 138.3 280 V289.4 H127.5 Z"/>
  <path d="M134 275.2 Q134.5 279.5 138.3 280 Q135.5 280.8 134.5 279.5 Z" fill="#e3e3e3" stroke-width="0.7"/>
 </g>
 <circle cx="127.6" cy="281.3" r="4.4" fill="#8ED8F8" stroke="#1E90DC" stroke-width="1.1"/>
 <path d="M127.6 279.4 V283.2 M125.7 281.3 H129.5" stroke="#3a1a1a" stroke-width="1"/>
 <!-- templates -->
 <rect x="172.8" y="275.2" width="10.8" height="14.4" rx="0.8" fill="#fff" stroke="#5F6368" stroke-width="1.1"/>
 <rect x="174.3" y="277" width="3.3" height="2.9" fill="#1E88E5"/>
 <path d="M179 277.6 H182.2 M179 279.4 H182.2" stroke="#1E88E5" stroke-width="0.9"/>
 <path d="M174.5 282.5 H182 M174.5 284.5 H182 M174.5 286.5 H182" stroke="#9AA0A6" stroke-width="0.7"/>
 <!-- open folder -->
 <path d="M218.9 289.4 V276 H223.5 L224.8 277.5 H232.4 V289.4 Z" fill="#EEF2F5" stroke="#5F6368" stroke-width="1.1" stroke-linejoin="round"/>
 <path d="M218.9 276 H223.5 L224.8 277.5 H232.4 V279.2 H218.9 Z" fill="#3C4043"/>
 <!-- clock -->
 <circle cx="273.1" cy="282.5" r="7.3" fill="#EEF2F6" stroke="#5F6368" stroke-width="1.1"/>
 <path d="M272.5 278.8 V283 L274.6 284.6" fill="none" stroke="#3C4043" stroke-width="1.1"/>
 <!-- save -->
 <path d="M322.8 279.5 V275.5 H335.2 V289.3 H322.8 V285.8" fill="none" stroke="#5F6368" stroke-width="1.2" stroke-linejoin="round"/>
 <path d="M320 282.7 H329" stroke="#5F6368" stroke-width="1.3"/>
 <path d="M327 280.4 L329.6 282.7 L327 285" fill="none" stroke="#202124" stroke-width="1.3"/>
 <!-- save as -->
 <path d="M369.8 279.5 V275.5 H382.2 V289.3 H369.8 V285.8" fill="none" stroke="#5F6368" stroke-width="1.2" stroke-linejoin="round"/>
 <path d="M367 282.7 H373.5" stroke="#5F6368" stroke-width="1.3"/>
 <path d="M371.6 280.4 L374.2 282.7 L371.6 285" fill="none" stroke="#202124" stroke-width="1.3"/>
 <path d="M375.5 282.7 H380.2" stroke="#bbb" stroke-width="1" stroke-dasharray="1.5 0.8"/>
 <!-- export pdf -->
 <path d="M418.4 278.5 V275.5 H429 V289.3 H418.4 V286.5" fill="none" stroke="#D93B3B" stroke-width="1.1" stroke-linejoin="round"/>
 <path d="M415 277.5 Q418 281 418.5 282.5 Q416 286 414.6 287.6 M418.5 282.5 H422.4" fill="none" stroke="#D93B3B" stroke-width="1.1"/>
 <circle cx="415" cy="287.5" r="0.9" fill="#D93B3B"/>
 <!-- print -->
 <rect x="465.5" y="275.3" width="7.9" height="4.8" rx="0.6" fill="#fff" stroke="#5F6368" stroke-width="1"/>
 <rect x="462.8" y="279.8" width="13.2" height="6.8" rx="1" fill="#EEF2F5" stroke="#5F6368" stroke-width="1"/>
 <path d="M464.5 285.5 H474.3" stroke="#111" stroke-width="1.2"/>
 <rect x="465.5" y="285.5" width="7.9" height="5" rx="0.6" fill="#fff" stroke="#5F6368" stroke-width="1"/>
 <circle cx="473.8" cy="281.6" r="0.5" fill="#9aa"/>
 <!-- share -->
 <path d="M527.9 275.9 L519.2 280.6 L527.6 285.2" fill="none" stroke="#5F6368" stroke-width="1"/>
 <circle cx="527.9" cy="275.9" r="1.5" fill="#5F6368"/>
 <circle cx="519.2" cy="280.6" r="1.5" fill="#5F6368"/>
 <circle cx="527.6" cy="285.2" r="1.5" fill="#5F6368"/>
 <!-- lock -->
 <path d="M570 283.6 V277.6 A2.2 2.2 0 0 1 574.4 277.6 V283.6" fill="none" stroke="#5F6368" stroke-width="1.1"/>
 <rect x="567.6" y="283.4" width="9.2" height="6.6" rx="0.6" fill="#fff" stroke="#5F6368" stroke-width="1.1"/>
 <circle cx="572.2" cy="287" r="0.7" fill="#202124"/>
 <!-- properties -->
 <circle cx="628.1" cy="282.8" r="7.6" fill="#EEF2F6" stroke="#5F6368" stroke-width="1.1"/>
 <path d="M626.4 280.5 H628.4 V286 M626.5 286.3 H630" fill="none" stroke="#3C4043" stroke-width="1.2"/>
 <circle cx="628.2" cy="278.6" r="0.8" fill="#3C4043"/>
 <!-- help -->
 <circle cx="683.5" cy="282.8" r="7.6" fill="#EEF2F6" stroke="#5F6368" stroke-width="1.1"/>
 <path d="M681.3 280.6 A2.2 2.1 0 1 1 684.2 282.6 Q683.5 283 683.5 284.3" fill="none" stroke="#3C4043" stroke-width="1.2"/>
 <circle cx="683.5" cy="286.4" r="0.8" fill="#3C4043"/>
</svg>
<!-- ribbon labels -->
<div class="a lbl" style="left:101.75px;top:295px">NEW</div>
<div class="a lbl" style="left:149px;top:295px">TEMPLATES</div>
<div class="a lbl" style="left:195.6px;top:295px">OPEN</div>
<div class="a lbl" style="left:242.8px;top:295px">OPEN<br>RECENT</div>
<div class="a lbl" style="left:298.1px;top:295px">SAVE</div>
<div class="a lbl" style="left:345.4px;top:295px">SAVE AS</div>
<div class="a lbl" style="left:392.3px;top:295px">EXPORT<br>TO PDF</div>
<div class="a lbl" style="left:439.1px;top:295px">PRINT</div>
<div class="a lbl" style="left:494.70000000000005px;top:294.3px">SHARE</div>
<div class="a lbl" style="left:541.9px;top:295px">PROTECT</div>
<div class="a lbl" style="left:597.6px;top:295px">PROPERTIES</div>
<div class="a lbl" style="left:652.9px;top:295px">HELP</div>
<div class="a sep" style="left:300.3px"></div>
<div class="a sep" style="left:497.3px"></div>
<div class="a sep" style="left:599.6px"></div>
<div class="a sep" style="left:655px"></div>
</body></html>
